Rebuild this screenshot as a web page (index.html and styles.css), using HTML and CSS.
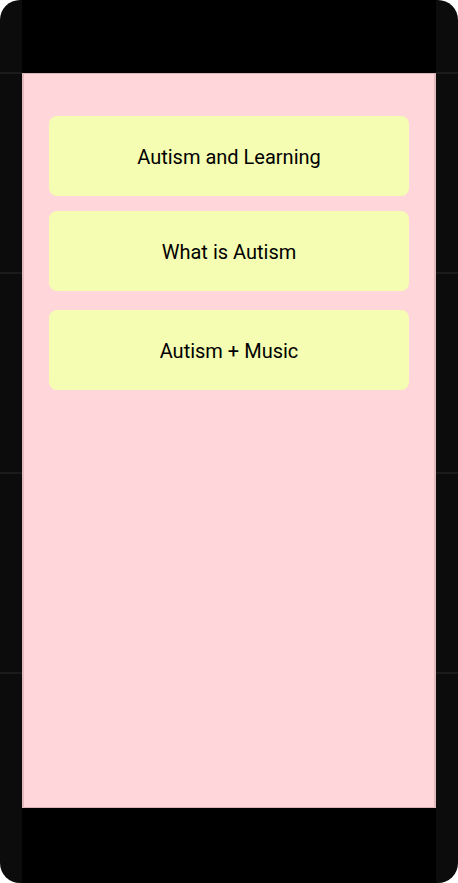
FILE: index.html
```html
<!DOCTYPE html>
<html lang="en">
<head>
<meta charset="utf-8">
<title>Autism</title>
<link rel="stylesheet" href="styles.css">
</head>
<body>
<div class="device">
  <div class="side">
    <div class="seg"></div><div class="seg"></div><div class="seg"></div><div class="seg"></div>
  </div>
  <div class="center">
    <div class="topbar"></div>
    <main class="screen">
      <div class="card card-1">Autism and Learning</div>
      <div class="card card-2">What is Autism</div>
      <div class="card card-3">Autism + Music</div>
    </main>
    <div class="bottombar"></div>
  </div>
  <div class="side">
    <div class="seg"></div><div class="seg"></div><div class="seg"></div><div class="seg"></div>
  </div>
</div>
</body>
</html>
```

FILE: styles.css
```css
html, body {
  margin: 0;
  padding: 0;
  background: #ffffff;
}

.device {
  width: 458px;
  height: 883px;
  border-radius: 20px;
  overflow: hidden;
  background: #0c0c0c;
  display: grid;
  grid-template-columns: 22px 1fr 22px;
}

.side {
  display: flex;
  flex-direction: column;
  padding-top: 72px;
}

.seg {
  height: 200px;
  flex: none;
  box-sizing: border-box;
  border-top: 2px solid #1b1b1b;
}

.center {
  display: flex;
  flex-direction: column;
  background: #000000;
}

.topbar {
  height: 73px;
  flex: none;
}

.bottombar {
  height: 75px;
  flex: none;
}

.screen {
  height: 735px;
  flex: none;
  box-sizing: border-box;
  background: #ffd6d9;
  border-top: 1px solid #dbb3b7;
  border-bottom: 1px solid #dbb3b7;
  border-left: 2px solid #e2babe;
  border-right: 2px solid #e2babe;
  padding: 42px 25px 0;
  display: flex;
  flex-direction: column;
}

.card {
  height: 80px;
  flex: none;
  box-sizing: border-box;
  padding-top: 2px;
  background: #f4fdb1;
  border-radius: 8px;
  display: flex;
  align-items: center;
  justify-content: center;
  font-family: Roboto, "Liberation Sans", sans-serif;
  font-size: 20px;
  color: #000000;
}

.card-2 {
  margin-top: 15px;
}

.card-3 {
  margin-top: 19px;
}
```
